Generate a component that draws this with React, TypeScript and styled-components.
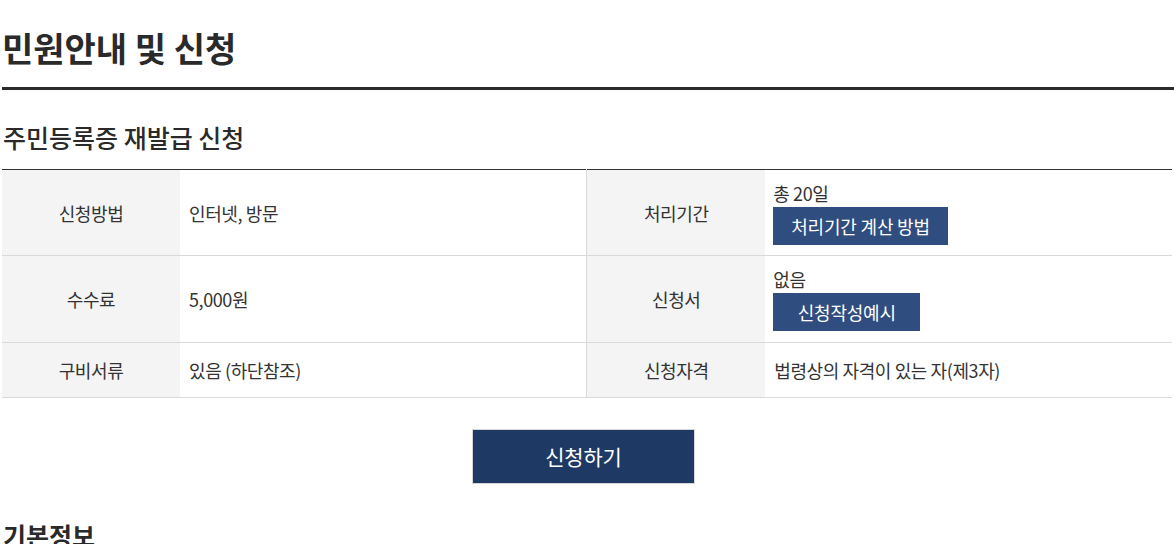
import React from "react";
import styled, { createGlobalStyle } from "styled-components";

const GlobalStyle = createGlobalStyle`
  html, body {
    margin: 0;
    padding: 0;
    background: #fff;
  }
  body {
    font-family: "Noto Sans CJK KR", "Noto Sans", sans-serif;
    color: #333;
  }
`;

const Page = styled.div`
  padding: 0 0 0 2px;
  overflow: hidden;
  height: 544px;
`;

const PageTitle = styled.h2`
  margin: 0;
  padding: 26px 0 17px;
  font-size: 34px;
  font-weight: 700;
  line-height: 44px;
  color: #2a2a2a;
  border-bottom: 3px solid #2b2b2b;
`;

const SectionTitle = styled.h3`
  margin: 0;
  padding: 29px 0 14px 1px;
  font-size: 25px;
  font-weight: 500;
  line-height: 36px;
  color: #2a2a2a;
`;

const InfoTable = styled.table`
  width: 1170px;
  border-collapse: collapse;
  table-layout: fixed;
  border-top: 1px solid #333;
  border-bottom: 1px solid #333;
  font-size: 18px;
  letter-spacing: -0.4px;

  th, td {
    border-bottom: 1px solid #d9d9d9;
    vertical-align: middle;
    line-height: 24px;
  }
  th {
    width: 176px;
    background: #f4f4f4;
    font-weight: 400;
    text-align: center;
    color: #333;
  }
  td {
    text-align: left;
    padding: 15px 9px;
  }
  td.split {
    border-right: 1px solid #d9d9d9;
  }
`;

const Row = styled.tr<{ $h: number }>`
  height: ${(p) => p.$h}px;
`;

const SmallButton = styled.a<{ $minWidth?: number }>`
  display: inline-block;
  box-sizing: border-box;
  margin-top: 2px;
  padding: 0 18px;
  min-width: ${(p) => (p.$minWidth ? `${p.$minWidth}px` : "0")};
  height: 38px;
  line-height: 38px;
  text-align: center;
  background: #304d80;
  color: #fff;
  font-size: 18px;
  letter-spacing: -0.2px;
  text-decoration: none;
`;

const Cell = styled.td`
  && {
    padding: 10px 8px;
  }
`;

const Actions = styled.div`
  display: flex;
  justify-content: center;
  padding: 31px 0 0;
  width: 1163px;
`;

const ApplyButton = styled.a`
  display: block;
  width: 221px;
  height: 53px;
  line-height: 53px;
  text-align: center;
  background: #1e3a64;
  border: 1px solid #d6d6d6;
  color: #fff;
  font-size: 21px;
  letter-spacing: -0.2px;
  text-decoration: none;
`;

const SubTitle = styled.h3`
  margin: 0;
  padding: 33px 0 0 1px;
  font-size: 25px;
  font-weight: 700;
  line-height: 36px;
  color: #2a2a2a;
`;

export default function App() {
  return (
    <>
      <GlobalStyle />
      <Page>
        <PageTitle>민원안내 및 신청</PageTitle>
        <SectionTitle>주민등록증 재발급 신청</SectionTitle>
        <InfoTable>
          <tbody>
            <Row $h={86}>
              <th>신청방법</th>
              <td className="split">인터넷, 방문</td>
              <th>처리기간</th>
              <Cell>
                <div>총 20일</div>
                <SmallButton href="#">처리기간 계산 방법</SmallButton>
              </Cell>
            </Row>
            <Row $h={87}>
              <th>수수료</th>
              <td className="split">5,000원</td>
              <th>신청서</th>
              <Cell>
                <div>없음</div>
                <SmallButton href="#" $minWidth={147}>신청작성예시</SmallButton>
              </Cell>
            </Row>
            <Row $h={55}>
              <th>구비서류</th>
              <td className="split">있음 (하단참조)</td>
              <th>신청자격</th>
              <td>법령상의 자격이 있는 자(제3자)</td>
            </Row>
          </tbody>
        </InfoTable>
        <Actions>
          <ApplyButton href="#">신청하기</ApplyButton>
        </Actions>
        <SubTitle>기본정보</SubTitle>
      </Page>
    </>
  );
}
